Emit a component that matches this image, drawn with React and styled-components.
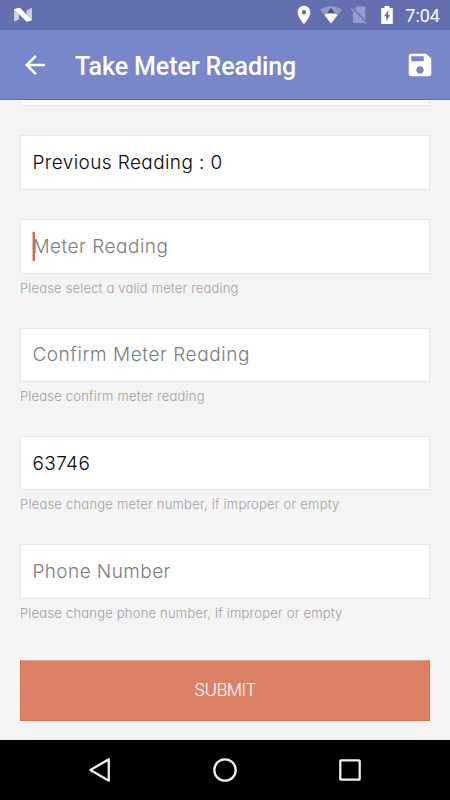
import React from "react";
import styled, { createGlobalStyle } from "styled-components";
import { MdArrowBack, MdSave, MdLocationOn } from "react-icons/md";

const fields = [
  { text: "Previous Reading : 0", filled: true, spacing: 0.4 },
  {
    text: "Meter Reading",
    focused: true,
    spacing: 0.5,
    hint: "Please select a valid meter reading",
    hintSpacing: 0.17,
  },
  {
    text: "Confirm Meter Reading",
    spacing: 0.56,
    hint: "Please confirm meter reading",
    hintSpacing: 0.2,
  },
  {
    text: "63746",
    filled: true,
    spacing: 0.4,
    hint: "Please change meter number, if improper or empty",
    hintSpacing: 0.22,
  },
  {
    text: "Phone Number",
    spacing: 0.42,
    hint: "Please change phone number, if improper or empty",
    hintSpacing: 0.21,
  },
];

const NougatIcon = () => (
  <svg width="20" height="16" viewBox="0 0 20 16">
    <path d="M1 2.5 6 1v11.5L1 14.5z" fill="#fff" opacity="0.65" />
    <path d="M13.5 3.5 19 0.8v12.4l-5.5 1.5z" fill="#fff" opacity="0.65" />
    <path d="M1 2.2 5.6 0.8q1-.3 1.8.5L18.8 13l-4 1.5q-1 .3-1.8-.5z" fill="#fff" />
  </svg>
);

const WifiIcon = () => (
  <svg width="22" height="18" viewBox="0 0 22 18">
    <path d="M0 3.5Q11-3.5 22 3.5L11 17.5z" fill="#fff" opacity="0.3" />
    <path d="M4.4 8.9Q11 4.5 17.6 8.9L11 17.5z" fill="#fff" />
    <path d="M11 1.8 14.9 7.6Q11 6.8 7.1 7.6z" fill="#474c72" />
  </svg>
);

const NoSimIcon = () => (
  <svg width="18" height="18" viewBox="0 0 18 18" fill="#fff" opacity="0.32">
    <path d="M7 .5h7q1.3 0 1.3 1.3v12L4.5 3z" />
    <path d="M3 5.2 14.6 16.9H4.3Q3 16.9 3 15.6z" />
    <path d="M1.4 1.8.5 2.7 15.4 17.7l.9-.9z" />
  </svg>
);

const BatteryIcon = () => (
  <svg width="12" height="18" viewBox="0 0 12 18">
    <path
      fill="#fff"
      fillRule="evenodd"
      d="M3.5 0h5v2H11q.8 0 .8.8v14.4q0 .8-.8.8H1q-.8 0-.8-.8V2.8Q.2 2 1 2h2.5zM7.5 4 2.9 10.3h2.3V15.2L9.1 8.9H6.8z"
    />
  </svg>
);

const App = () => {
  return (
    <Screen>
      <GlobalStyle />
      <StatusBar>
        <NougatIcon />
        <StatusIcons>
          <MdLocationOn size={22} />
          <WifiIcon />
          <NoSimIcon />
          <BatteryIcon />
          <Clock>7:04</Clock>
        </StatusIcons>
      </StatusBar>
      <Toolbar>
        <MdArrowBack size={30} />
        <Title>Take Meter Reading</Title>
        <MdSave size={30} />
      </Toolbar>
      <Content>
        <ClippedField />
        {fields.map((field) => (
          <Field key={field.text} $hasHint={!!field.hint}>
            <FieldBox $filled={field.filled}>
              {field.focused && <Caret />}
              <FieldText $spacing={field.spacing}>{field.text}</FieldText>
            </FieldBox>
            {field.hint && <Hint $spacing={field.hintSpacing}>{field.hint}</Hint>}
          </Field>
        ))}
        <SubmitButton>SUBMIT</SubmitButton>
      </Content>
      <NavBar>
        <svg width="26" height="26" viewBox="0 0 26 26">
          <path d="M21.8 2.3v21.4L3.4 13z" />
        </svg>
        <svg width="26" height="26" viewBox="0 0 26 26">
          <circle cx="13" cy="13" r="10.7" />
        </svg>
        <svg width="26" height="26" viewBox="0 0 26 26">
          <rect x="3.3" y="3.3" width="19.4" height="19.4" rx="0.8" />
        </svg>
      </NavBar>
    </Screen>
  );
};

const GlobalStyle = createGlobalStyle`
  * {
    box-sizing: border-box;
  }
  body {
    margin: 0;
  }
`;
const Screen = styled.div`
  display: flex;
  flex-direction: column;
  width: 450px;
  height: 800px;
  overflow: hidden;
  background: #f4f4f4;
  font-family: Inter, "Noto Sans", sans-serif;
  font-feature-settings: "cv11";
`;
const StatusBar = styled.div`
  display: flex;
  align-items: center;
  justify-content: space-between;
  height: 30px;
  padding: 0 10px 0 13px;
  background: #646fb0;
  color: #fff;
`;
const StatusIcons = styled.div`
  display: flex;
  align-items: center;
  svg:nth-child(2) {
    margin-left: 5px;
  }
  svg:nth-child(3) {
    margin-left: 8px;
  }
  svg:nth-child(4) {
    margin-left: 13px;
  }
`;
const Clock = styled.div`
  margin-left: 12.5px;
  padding-top: 1px;
  font-family: Roboto, sans-serif;
  font-size: 18px;
  line-height: 30px;
`;
const Toolbar = styled.div`
  display: flex;
  align-items: center;
  height: 70px;
  padding: 0 15px 0 20px;
  background: #7986c9;
  border-bottom: 1px solid #5c6bc0;
  color: #fff;
`;
const Title = styled.div`
  flex: 1;
  padding: 4px 0 0 25px;
  font-family: Roboto, sans-serif;
  font-size: 25px;
  font-weight: 500;
  letter-spacing: -0.08px;
`;
const Content = styled.div`
  display: flex;
  flex-direction: column;
  flex: 1;
  padding: 0 20px;
`;
const ClippedField = styled.div`
  height: 6px;
  margin-bottom: 29.3px;
  background: #fff;
  border: 1px solid #e6e6e6;
  border-top: 0;
`;
const Field = styled.div`
  height: ${(props) => (props.$hasHint ? "108.35px" : "84.1px")};
`;
const FieldBox = styled.div`
  position: relative;
  display: flex;
  align-items: center;
  height: 54.3px;
  padding-left: 11.4px;
  background: #fff;
  border: 1px solid #e6e6e6;
  color: ${(props) => (props.$filled ? "#080808" : "#7c7c7c")};
`;
const FieldText = styled.div`
  position: relative;
  font-size: 19px;
  font-weight: 300;
  letter-spacing: ${(props) => props.$spacing}px;
  white-space: nowrap;
`;
const Caret = styled.div`
  position: absolute;
  left: 11px;
  top: 12px;
  width: 3px;
  height: 29px;
  background: #d86b42;
  border-left: 1px solid #ebb9a7;
`;
const Hint = styled.div`
  padding-top: 5px;
  color: #a0a0a0;
  font-size: 13px;
  font-weight: 300;
  line-height: 18px;
  letter-spacing: ${(props) => props.$spacing}px;
  white-space: nowrap;
`;
const SubmitButton = styled.button`
  height: 60.4px;
  margin-top: 7.4px;
  padding: 0;
  border: 1px solid #d8704d;
  border-top-color: #e0a18e;
  border-radius: 0;
  background: #dc8166;
  color: #fff;
  font-family: inherit;
  font-size: 17px;
  font-weight: 300;
  letter-spacing: -0.6px;
`;
const NavBar = styled.div`
  display: flex;
  align-items: center;
  justify-content: space-between;
  height: 60px;
  padding: 0 87px;
  background: #000;
  svg {
    fill: none;
    stroke: #eee;
    stroke-width: 2.3;
    stroke-linejoin: round;
  }
`;

export default App;
